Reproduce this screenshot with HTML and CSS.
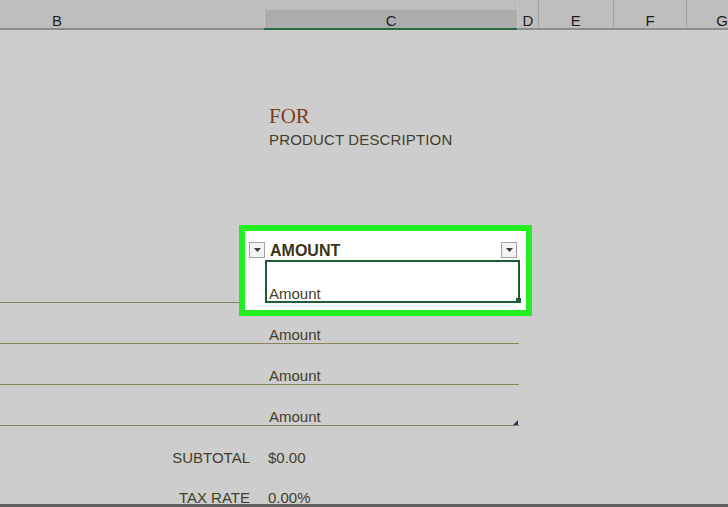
FILE: index.html
```html
<!DOCTYPE html>
<html>
<head>
<meta charset="utf-8">
<title>Sheet</title>
<link rel="stylesheet" href="styles.css">
</head>
<body>
<div class="sheet">
  <div class="colhead">
    <div class="ch ch-b"><span>B</span></div>
    <div class="ch ch-c"><div class="ch-c-inner"><span>C</span></div></div>
    <div class="ch ch-d"><span>D</span></div>
    <div class="ch ch-e"><span>E</span></div>
    <div class="ch ch-f"><span>F</span></div>
    <div class="ch ch-g"><span>G</span></div>
  </div>
  <div class="grid">
    <div class="highlight"></div>
    <div class="spacer s1"></div>
    <div class="row title-row"><div class="cb"></div><div class="cc"><span class="t for">FOR</span></div></div>
    <div class="row desc-row"><div class="cb"></div><div class="cc"><span class="t desc">PRODUCT DESCRIPTION</span></div></div>
    <div class="spacer s2"></div>
    <div class="row head-row">
      <div class="cb"><span class="dd"><svg width="7" height="4" viewBox="0 0 7 4"><path d="M0 0H7L3.5 4Z" fill="#3a3a3a"/></svg></span></div>
      <div class="cc"><span class="t amount-h">AMOUNT</span><span class="dd dd-r"><svg width="7" height="4" viewBox="0 0 7 4"><path d="M0 0H7L3.5 4Z" fill="#3a3a3a"/></svg></span></div>
    </div>
    <div class="row item"><div class="cb"></div><div class="cc selected"><span class="t">Amount</span><span class="fill"></span></div></div>
    <div class="row item"><div class="cb"></div><div class="cc"><span class="t">Amount</span></div></div>
    <div class="row item"><div class="cb"></div><div class="cc"><span class="t">Amount</span></div></div>
    <div class="row item"><div class="cb"></div><div class="cc last"><span class="t">Amount</span><svg class="rz" width="5" height="5" viewBox="0 0 5 5"><path d="M5 0V5H0Z" fill="#2d3062"/></svg></div></div>
    <div class="row sum-row"><div class="cb"><span class="t">SUBTOTAL</span></div><div class="cc"><span class="t">$0.00</span></div></div>
    <div class="row sum-row tax-row"><div class="cb"><span class="t">TAX RATE</span></div><div class="cc"><span class="t">0.00%</span></div></div>
  </div>
  <div class="bottomline"></div>
</div>
</body>
</html>
```

FILE: styles.css
```css
* { box-sizing: border-box; margin: 0; padding: 0; }
html, body { width: 728px; height: 507px; overflow: hidden; }
body {
  background: #cdcdcd;
  font-family: "Liberation Sans", Arial, sans-serif;
  color: #433e2a;
}
.sheet { width: 728px; height: 507px; display: flex; flex-direction: column; }

/* column header */
.colhead { display: flex; height: 30px; background: #bdbdbd; flex: none; }
.ch {
  height: 30px;
  border-bottom: 2px solid #8d8d8d;
  display: flex;
  align-items: flex-end;
  justify-content: center;
  font-size: 15px;
  line-height: 14px;
  color: #1d1d1d;
}
.ch-b { width: 265px; justify-content: flex-start; padding-left: 52px; }
.ch-c { width: 254px; border-bottom-color: #2b6a3e; padding-top: 10px; align-items: stretch; }
.ch-c-inner {
  flex: 1;
  background: #acacac;
  border-left: 1px solid #c6c6c6;
  display: flex;
  align-items: flex-end;
  justify-content: center;
}
.ch-d { width: 21px; border-left: 1px solid #c4c4c4; }
.ch-e { width: 75px; border-left: 1px solid #9e9e9e; }
.ch-f { width: 74px; border-left: 1px solid #9e9e9e; }
.ch-g { flex: 1; border-left: 1px solid #9e9e9e; justify-content: flex-start; padding-left: 29px; }

/* sheet body */
.grid { position: relative; height: 474px; overflow: hidden; flex: none; }
.highlight {
  position: absolute;
  left: 239px;
  top: 195px;
  width: 293px;
  height: 91px;
  border: 6px solid #22ee22;
  background: #ffffff;
  z-index: 0;
}
.row { display: grid; grid-template-columns: 265px 254px; width: 519px; }
.cb, .cc { display: flex; align-items: flex-end; min-width: 0; }
.cb { justify-content: flex-end; padding-right: 15px; }
.cc { padding-left: 4px; }
.t {
  position: relative;
  z-index: 1;
  font-size: 15px;
  line-height: 17px;
  white-space: nowrap;
}
.s1 { height: 74px; }
.title-row { height: 24px; }
.for {
  font-family: "Liberation Serif", "Times New Roman", serif;
  font-size: 21px;
  line-height: 24px;
  color: #7d3e1d;
}
.desc-row { height: 17px; margin-top: 3px; }
.desc { letter-spacing: 0.15px; }
.s2 { height: 84px; }

.head-row { height: 30px; }
.head-row .cb { padding-right: 0; padding-bottom: 4px; }
.head-row .cc { padding-left: 5px; padding-right: 2px; padding-bottom: 2px; justify-content: space-between; }
.amount-h { font-weight: bold; font-size: 16px; line-height: 18px; color: #3a3519; }
.dd {
  position: relative;
  z-index: 1;
  width: 16px;
  height: 16px;
  background: #f3f3f3;
  border: 1px solid #a3a3a3;
  display: flex;
  justify-content: center;
  align-items: flex-start;
  padding-top: 5px;
}
.dd svg { display: block; }
.dd-r { margin-bottom: 2px; }

.item { height: 41px; border-bottom: 1px solid #8c8459; }
.selected { position: relative; }
.selected::after {
  content: "";
  position: absolute;
  top: -2px;
  left: 0;
  right: -1px;
  bottom: -1px;
  border: 2px solid #1f5b36;
  z-index: 1;
}
.fill {
  position: absolute;
  right: -2px;
  bottom: -1px;
  width: 5px;
  height: 5px;
  background: #1f5b36;
  z-index: 2;
}
.last { position: relative; }
.rz { position: absolute; right: 1px; bottom: 0; display: block; }

.sum-row { height: 41px; }
.sum-row .cb, .sum-row .cc { padding-bottom: 1px; }
.sum-row .cc { padding-left: 3px; }
.tax-row { height: 37px; }
.tax-row .cb, .tax-row .cc { padding-bottom: 0; }
.tax-row .t { line-height: 13px; }

.bottomline { height: 3px; background: #5e5e5e; flex: none; }
```
